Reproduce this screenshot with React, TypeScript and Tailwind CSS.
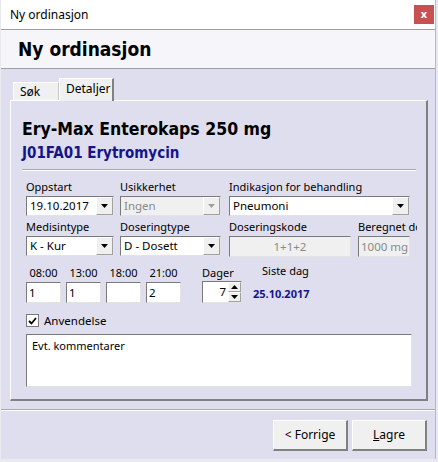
import React from "react";

const ui = { fontFamily: '"Noto Sans", "Liberation Sans", sans-serif' };
const heading = { fontFamily: '"DejaVu Sans Condensed", "DejaVu Sans", sans-serif' };

function DropArrow({ disabled }: { disabled?: boolean }) {
  return (
    <div className="w-[17px] h-full bg-[#f0f0f0] border border-t-white border-l-white border-r-[#a0a0a0] border-b-[#a0a0a0] flex items-center justify-center">
      <svg width="8" height="4" viewBox="0 0 8 4">
        <path d="M0 0h7L3.5 4z" fill={disabled ? "#a0a0a0" : "#000"} />
      </svg>
    </div>
  );
}

function Combo({ value, width, disabled }: { value: string; width: string; disabled?: boolean }) {
  return (
    <div className={`${width} h-[20px] flex border border-t-[#7a7a7a] border-l-[#7a7a7a] border-r-[#e3e3e3] border-b-[#e3e3e3] ${disabled ? "bg-[#f0f0f0]" : "bg-white"}`}>
      <div className={`flex-1 pl-[3px] text-[11.5px] leading-[18px] whitespace-nowrap ${disabled ? "text-[#8a8a8a]" : "text-black"}`}>{value}</div>
      <DropArrow disabled={disabled} />
    </div>
  );
}

function Field({ label, children, width }: { label: string; children: React.ReactNode; width: string }) {
  return (
    <div className={`${width} flex flex-col`}>
      <div className="text-[11px] leading-[16px] h-[17px] whitespace-nowrap text-black">{label}</div>
      {children}
    </div>
  );
}

function TextBox({ value, width, disabled, center }: { value: string; width: string; disabled?: boolean; center?: boolean }) {
  return (
    <div className={`${width} h-[21px] overflow-hidden whitespace-nowrap border border-t-[#7a7a7a] border-l-[#7a7a7a] border-r-[#e3e3e3] border-b-[#e3e3e3] text-[11.5px] leading-[19px] px-[2px] ${disabled ? "bg-[#f0f0f0] text-[#8a8a8a]" : "bg-white text-black"} ${center ? "text-center" : ""}`}>
      {value}
    </div>
  );
}

export default function App() {
  const times = [
    { t: "08:00", v: "1" },
    { t: "13:00", v: "1" },
    { t: "18:00", v: "" },
    { t: "21:00", v: "2" },
  ];

  return (
    <div className="w-[438px] h-[462px] bg-[#e9e9ef] overflow-hidden" style={ui}>
      <div className="ml-px w-[435px] h-[459px] bg-[#dfdeee] border-r border-[#b8b8c4] flex flex-col">
        {/* title bar */}
        <div className="h-[30px] bg-white flex items-center justify-between pl-[9px] pr-[1px] border-b border-[#a0a0a0]">
          <span className="text-[12px] text-black">Ny ordinasjon</span>
          <div className="w-[20px] h-[19px] bg-[#c75050] flex items-center justify-center text-white text-[11px] font-bold leading-none pb-[2px]">x</div>
        </div>

        {/* header */}
        <div className="h-[39px] bg-[#f5f5fa] border-b border-[#a0a0a0] flex items-center pl-[17px]">
          <span className="text-[19px] font-bold text-black" style={heading}>Ny ordinasjon</span>
        </div>

        {/* tabs */}
        <div className="pl-[9px] pt-[9px]">
          <div className="flex items-end h-[22px]">
            <div className="ml-[3px] w-[46px] h-[18px] bg-[#f0f0f0] border border-b-0 border-t-white border-l-white border-r-[#c8c8c8] text-[12px] leading-[18px] pl-[6px]">Søk</div>
            <div className="w-[55px] h-[23px] bg-[#f0f0f0] border-t border-l border-r-2 border-t-white border-l-white border-r-[#808080] text-[12px] leading-[20px] pl-[6px] -mb-px relative">Detaljer</div>
          </div>

          {/* panel */}
          <div className="w-[418px] h-[301px] border border-t-white border-l-white border-r-2 border-b-2 border-r-[#808080] border-b-[#808080]">
            <div className="w-[406px] overflow-hidden pl-[11px] pt-[17px]">
              <div className="text-[17.5px] font-bold leading-[22px] text-black" style={heading}>Ery-Max Enterokaps 250 mg</div>
              <div className="text-[15px] font-bold leading-[20px] text-[#15158a] mt-[3px]" style={heading}>J01FA01 Erytromycin</div>
              <div className="mt-[6px] w-[394px] border-t border-[#a8a8b0] border-b border-b-white" />

              <div className="pl-[4px] pt-[8px]">
                <div className="flex">
                  <Field label="Oppstart" width="w-[88px]">
                    <Combo value="19.10.2017" width="w-[88px]" />
                  </Field>
                  <Field label="Usikkerhet" width="w-[101px] ml-[6px]">
                    <Combo value="Ingen" width="w-[101px]" disabled />
                  </Field>
                  <Field label="Indikasjon for behandling" width="w-[181px] ml-[8px]">
                    <Combo value="Pneumoni" width="w-[181px]" />
                  </Field>
                </div>

                <div className="flex mt-[3px]">
                  <Field label="Medisintype" width="w-[88px]">
                    <Combo value="K - Kur" width="w-[88px]" />
                  </Field>
                  <Field label="Doseringtype" width="w-[101px] ml-[6px]">
                    <Combo value="D - Dosett" width="w-[101px]" />
                  </Field>
                  <Field label="Doseringskode" width="w-[122px] ml-[8px]">
                    <TextBox value="1+1+2" width="w-[122px]" disabled center />
                  </Field>
                  <Field label="Beregnet dose" width="w-[52px] ml-[7px]">
                    <TextBox value="1000 mg" width="w-[52px]" disabled />
                  </Field>
                </div>

                <div className="flex h-[46px]">
                  <div className="flex gap-[5px] items-end">
                    {times.map((x) => (
                      <div key={x.t} className="w-[35px] flex flex-col items-center">
                        <div className="text-[11px] leading-[16px] pb-[1px]">{x.t}</div>
                        <TextBox value={x.v} width="w-[35px]" />
                      </div>
                    ))}
                  </div>
                  <div className="ml-[21px] flex flex-col justify-end">
                    <div className="text-[11px] leading-[16px]">Dager</div>
                    <div className="w-[40px] h-[22px] bg-white border border-t-[#7a7a7a] border-l-[#7a7a7a] border-r-[#e3e3e3] border-b-[#e3e3e3] flex">
                      <div className="flex-1 text-right pr-[2px] text-[11.5px] leading-[20px]">7</div>
                      <div className="w-[13px] flex flex-col">
                        <div className="flex-1 bg-[#f0f0f0] border border-t-white border-l-white border-r-[#a0a0a0] border-b-[#a0a0a0] flex items-center justify-center">
                          <svg width="7" height="4" viewBox="0 0 7 4"><path d="M3.5 0L7 4H0z" fill="#000" /></svg>
                        </div>
                        <div className="flex-1 bg-[#f0f0f0] border border-t-white border-l-white border-r-[#a0a0a0] border-b-[#a0a0a0] flex items-center justify-center">
                          <svg width="7" height="4" viewBox="0 0 7 4"><path d="M0 0h7L3.5 4z" fill="#000" /></svg>
                        </div>
                      </div>
                    </div>
                  </div>
                  <div className="ml-[11px] flex flex-col pt-[6px]">
                    <div className="text-[11px] leading-[16px] pl-[9px]">Siste dag</div>
                    <div className="mt-[7px] text-[11px] font-bold leading-[16px] text-[#15158a]">25.10.2017</div>
                  </div>
                </div>

                <div className="flex items-center mt-[11px] h-[13px]">
                  <div className="w-[13px] h-[13px] bg-white border border-[#7a7a7a] flex items-center justify-center">
                    <svg width="9" height="8" viewBox="0 0 9 8"><path d="M1 4l2.5 2.5L8 1" stroke="#000" strokeWidth="1.8" fill="none" /></svg>
                  </div>
                  <span className="ml-[5px] text-[11.5px] leading-[16px]">Anvendelse</span>
                </div>

                <div className="mt-[7px] w-[386px] h-[53px] bg-white border border-t-[#7a7a7a] border-l-[#7a7a7a] border-r-[#e3e3e3] border-b-[#e3e3e3] text-[11px] leading-[16px] px-[5px] pt-[3px]">
                  Evt. kommentarer
                </div>
              </div>
            </div>
          </div>
        </div>

        {/* footer */}
        <div className="mt-[8px] border-t border-[#a8a8b4] border-b border-b-white" />
        <div className="flex justify-end gap-[4px] pr-[8px] pt-[9px]">
          <button className="w-[75px] h-[31px] bg-[#f0f0f0] border border-t-white border-l-white border-r-2 border-b-2 border-r-[#808080] border-b-[#808080] text-[12px] text-black">&lt; Forrige</button>
          <button className="w-[75px] h-[31px] bg-[#f0f0f0] border border-t-white border-l-white border-r-2 border-b-2 border-r-[#808080] border-b-[#808080] text-[12px] text-black"><span className="underline">L</span>agre</button>
        </div>
      </div>
    </div>
  );
}
